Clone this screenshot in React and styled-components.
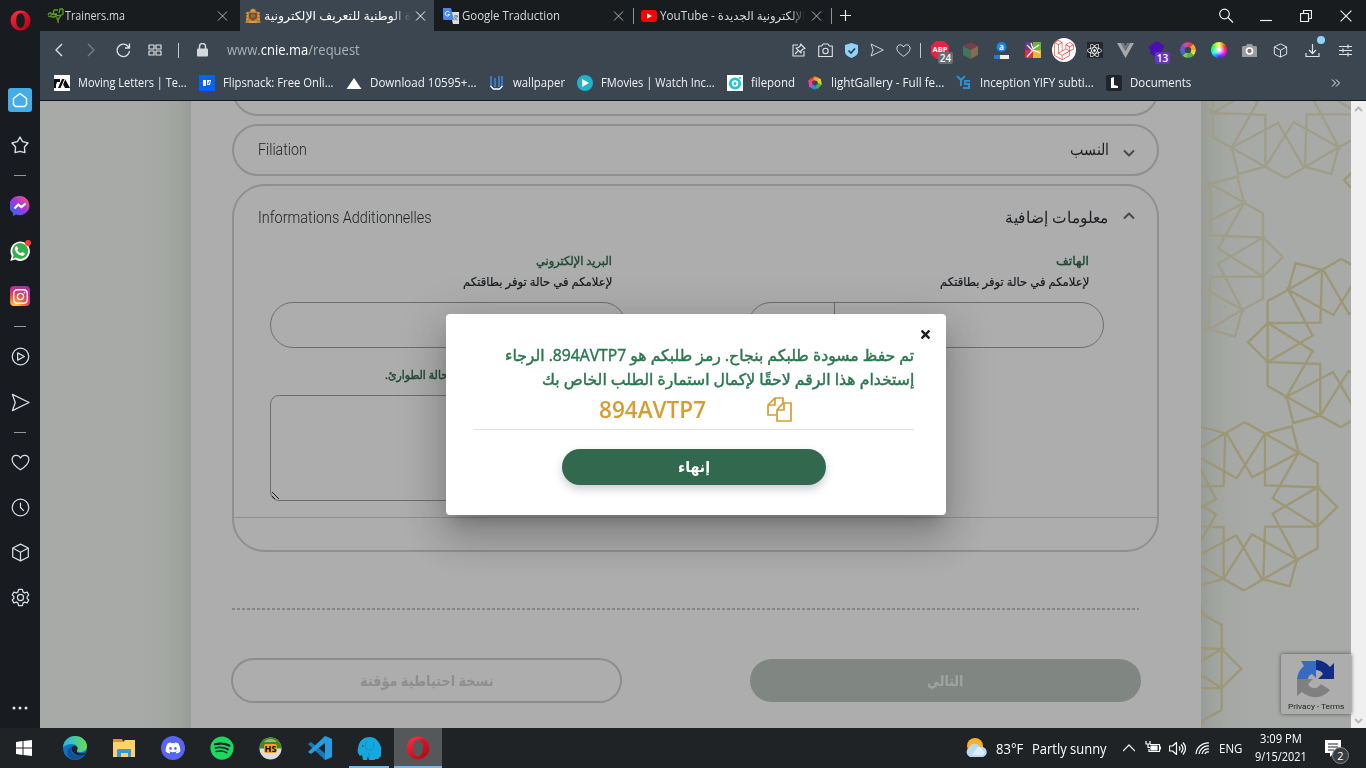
import React, { useLayoutEffect, useRef, useState } from "react";
import styled, { createGlobalStyle, css } from "styled-components";
import { FaInstagram, FaDiscord, FaSpotify, FaReact, FaLaravel, FaTimes } from "react-icons/fa";

const Global = createGlobalStyle`
  * { box-sizing: border-box; }
  body { margin: 0; overflow: hidden; background: #1f2224; }
  svg { display: block; flex: none; }
`;

const ui = `"Open Sans", "Noto Sans", "DejaVu Sans", sans-serif`;
const arabic = `"Open Sans", "DejaVu Sans", sans-serif`;

/* ---------- text fitted to a known measure ---------- */
const FitBox = styled.span`
  display: block;
  flex: none;
  width: ${(p) => p.$w}px;
  white-space: nowrap;
  direction: ${(p) => (p.$rtl ? "rtl" : "ltr")};
`;
const FitText = styled.span`
  display: inline-block;
  transform-origin: ${(p) => (p.$rtl ? "right" : "left")} center;
`;
function Fit({ w, rtl, children, className }) {
  const ref = useRef(null);
  const [scale, setScale] = useState(1);
  useLayoutEffect(() => {
    const natural = ref.current.offsetWidth;
    if (natural) setScale(w / natural);
  }, [w, children]);
  return (
    <FitBox $w={w} $rtl={rtl} className={className}>
      <FitText ref={ref} $rtl={rtl} style={{ transform: `scaleX(${scale})` }}>{children}</FitText>
    </FitBox>
  );
}

/* ---------- shell ---------- */
const Screen = styled.div`
  width: 1366px;
  height: 768px;
  display: grid;
  grid-template: 728px 40px / 40px 1326px;
  font-family: ${ui};
  overflow: hidden;
`;
const Side = styled.nav`
  background: #181b20;
  display: flex;
  flex-direction: column;
  color: #d9dfe4;
`;
const SideCell = styled.div`
  height: ${(p) => p.$h}px;
  margin-top: ${(p) => p.$mt || 0}px;
  display: flex;
  align-items: center;
  justify-content: center;
  position: relative;
`;
const Dash = styled.i`
  width: 12px;
  height: 1px;
  background: #8c9aa5;
`;
const HomeTile = styled.div`
  width: 24px;
  height: 24px;
  border-radius: 3px;
  background: #45ade5;
  color: #fff;
  display: grid;
  place-items: center;
`;
const InstaTile = styled.div`
  width: 20px;
  height: 20px;
  border-radius: 4px;
  background: radial-gradient(circle at 25% 105%, #fdc04f 0 10%, #f3643b 38%, #cf2f7e 65%, #7a3fc0 100%);
  color: #fff;
  display: grid;
  place-items: center;
`;
const RedDot = styled.i`
  position: absolute;
  left: 25px;
  top: 11px;
  width: 6px;
  height: 6px;
  border-radius: 50%;
  background: #ff3b30;
`;

const Browser = styled.div`
  display: flex;
  flex-direction: column;
  min-width: 0;
`;
const TabBar = styled.header`
  height: 31px;
  background: #181c1f;
  display: flex;
  align-items: center;
  color: #d5d8da;
`;
const Tab = styled.div`
  width: ${(p) => p.$w}px;
  height: 31px;
  padding: 0 7px 0 ${(p) => p.$pl || 7}px;
  display: flex;
  align-items: center;
  gap: ${(p) => p.$gap ?? 2}px;
  font-size: 12px;
  background: ${(p) => (p.$active ? "#3b4651" : "transparent")};
  color: ${(p) => (p.$active ? "#fff" : "#d5d8da")};
  > :last-child { margin-left: auto; }
`;
const TabTitle = styled(Fit)`
  ${(p) => p.$fade && css`
    mask-image: linear-gradient(to right, #000 ${p.$fade}%, transparent 100%);
  `}
`;
const TabRule = styled.i`
  width: 1px;
  height: 16px;
  background: #8b949c;
`;
const WinCell = styled.div`
  width: ${(p) => p.$w || 40}px;
  display: grid;
  place-items: center;
  margin-left: ${(p) => (p.$push ? "auto" : 0)};
  color: #eee;
`;

const AddressBar = styled.div`
  height: 38px;
  background: #3b4651;
  display: flex;
  align-items: center;
  padding-left: 3px;
  color: #dfe3e6;
`;
const ToolCell = styled.div`
  width: ${(p) => p.$w}px;
  height: 38px;
  display: flex;
  align-items: center;
  justify-content: center;
  position: relative;
  flex: none;
  opacity: ${(p) => (p.$dim ? 0.35 : 1)};
`;
const Url = styled.div`
  display: flex;
  margin-left: 8px;
  width: 559px;
  padding-bottom: 2px;
  font-size: 14px;
  color: #aab2b9;
  b { font-weight: 400; color: #fff; }
`;
const ToolRule = styled.i`
  width: 1px;
  height: 15px;
  background: #c0c6ca;
`;
const Badge = styled.span`
  position: absolute;
  left: 14px;
  top: 21px;
  min-width: 15px;
  height: 12px;
  border-radius: 2px;
  background: ${(p) => p.$c};
  color: #fff;
  font: 600 10px/12px ${ui};
  text-align: center;
`;
const BlueDot = styled.i`
  position: absolute;
  right: 3px;
  top: 5px;
  width: 8px;
  height: 8px;
  border-radius: 50%;
  background: #8fd4fb;
`;
const LaravelDisc = styled.div`
  width: 24px;
  height: 24px;
  border-radius: 50%;
  background: #fff;
  display: grid;
  place-items: center;
  color: #f9322c;
`;
const ReactTile = styled.div`
  width: 16px;
  height: 16px;
  background: #23272c;
  color: #fff;
  display: grid;
  place-items: center;
`;
const Wheel = styled.i`
  width: 16px;
  height: 16px;
  border-radius: 50%;
  background: ${(p) => (p.$soft
    ? "radial-gradient(circle, #fff 0 8%, transparent 55%), conic-gradient(#ff3, #f33, #f0f, #33f, #0ff, #3f3, #ff3)"
    : "conic-gradient(#e4433a 0 12%, #f2a32b 0 25%, #f0d23c 0 37%, #56b346 0 52%, #8bc63e 0 62%, #3b6ad8 0 75%, #7e4fc5 0 88%, #d0499c 0)")};
  ${(p) => !p.$soft && "mask-image: radial-gradient(circle, transparent 0 3px, #000 3.6px);"}
`;

const Bookmarks = styled.div`
  height: 31px;
  background: #3b4651;
  display: flex;
  align-items: center;
  gap: 12px;
  padding: 0 26px 4px 14px;
  color: #f0f2f4;
  font-size: 12px;
  > :last-child { margin-left: auto; }
`;
const Bookmark = styled.div`
  display: flex;
  align-items: center;
  gap: 8px;
`;

/* ---------- page ---------- */
const Page = styled.main`
  height: 628px;
  border-top: 1px solid #15191e;
  display: flex;
  position: relative;
  background: #a7aaa6;
  overflow: hidden;
`;
const Margin = styled.div`
  width: ${(p) => p.$w}px;
  flex: none;
  overflow: hidden;
  background: linear-gradient(${(p) => (p.$right ? "to right" : "to left")}, #989c98, #a0a49f 12px, #a5a8a4 30px, #a7aaa6 48px);
`;
const Card = styled.section`
  width: 1010px;
  flex: none;
  background: #adadad;
  padding: 0 42px 0 41px;
`;
const Panel = styled.div`
  width: 927px;
  height: ${(p) => p.$h}px;
  margin-top: ${(p) => p.$mt}px;
  border: 2px solid #8f8f8f;
  border-radius: ${(p) => p.$r || 26}px;
`;
const PanelHead = styled.div`
  height: ${(p) => p.$h}px;
  display: flex;
  align-items: center;
  padding: 0 22px 0 24px;
  font: 300 16px/20px Roboto, sans-serif;
  color: #1d1f21;
  > svg { color: #47494a; margin-top: ${(p) => p.$drop || 0}px; }
`;
const PanelTitle = styled(Fit)`
  margin: 0 14px 2px auto;
  font: 300 16px/20px ${arabic};
`;
const Columns = styled.div`
  display: flex;
  gap: 122px;
  padding: 0 36px;
  height: 267px;
`;
const Column = styled.div`
  width: 356px;
  display: flex;
  flex-direction: column;
`;
const FieldLabel = styled(Fit)`
  font: 400 12px/21px ${arabic};
  color: ${(p) => (p.$green ? "#1f4934" : "#17191b")};
  align-self: flex-end;
  margin-right: ${(p) => p.$mr ?? 14}px;
  height: 21px;
  margin-top: ${(p) => p.$mt || 0}px;
  -webkit-text-stroke: ${(p) => (p.$green ? 0.4 : 0.2)}px currentColor;
`;
const Pill = styled.div`
  height: 46px;
  margin-top: 10px;
  border: 1px solid #6c6f6e;
  border-radius: 23px;
  display: flex;
`;
const Prefix = styled.div`
  width: 86px;
  border-right: 1px solid #6c6f6e;
`;
const TextArea = styled.div`
  height: 106px;
  margin-top: 10px;
  border: 1px solid #6c6f6e;
  border-radius: 9px;
  display: flex;
  align-items: flex-end;
`;
const Footer = styled.div`
  height: 33px;
  border-top: 1px solid #8f8f8f;
`;
const Dashed = styled.div`
  width: 907px;
  height: 2px;
  margin-top: 56px;
  background: repeating-linear-gradient(to right, #858585 0 3px, transparent 3px 5px);
`;
const Actions = styled.div`
  display: flex;
  align-items: center;
  justify-content: space-between;
  width: 910px;
  margin: 48px 0 0 -1px;
`;
const Action = styled.div`
  width: 391px;
  height: ${(p) => (p.$solid ? 43 : 45)}px;
  padding-bottom: 2px;
  border-radius: 23px;
  border: ${(p) => (p.$solid ? "0" : "2px solid #8d8d8d")};
  background: ${(p) => (p.$solid ? "#808782" : "transparent")};
  color: ${(p) => (p.$solid ? "#a0a4a1" : "#8e8e8e")};
  display: flex;
  align-items: center;
  justify-content: center;
  font: 700 15px/20px ${arabic};
`;
const Captcha = styled.div`
  position: absolute;
  right: 15px;
  top: 553px;
  width: 70px;
  height: 60px;
  border-radius: 2px 0 0 2px;
  background: #adadad;
  box-shadow: 0 0 4px #555;
  display: flex;
  flex-direction: column;
  align-items: center;
  gap: 2px;
  padding-top: 6px;
  font: 8px/14px Roboto, sans-serif;
  color: #1d1d1d;
`;
const ScrollBar = styled.div`
  width: 15px;
  margin-left: auto;
  background: #f0f0f0;
  display: flex;
  flex-direction: column;
  justify-content: space-between;
  align-items: center;
  padding: 4px 0 3px;
`;

/* ---------- dialog ---------- */
const Dialog = styled.div`
  position: absolute;
  left: 406px;
  top: 213px;
  width: 500px;
  height: 201px;
  border-radius: 4px;
  background: #fff;
  box-shadow: 0 11px 15px -7px rgba(0,0,0,.2), 0 24px 38px 3px rgba(0,0,0,.14), 0 9px 46px 8px rgba(0,0,0,.12);
  padding: 14px 32px 0 28px;
  display: flex;
  flex-direction: column;
`;
const CloseRow = styled.div`
  display: flex;
  justify-content: flex-end;
  height: 15px;
  margin-right: -18px;
  color: #1d1d1f;
`;
const Message = styled(Fit)`
  font: 400 16px/24px ${arabic};
  -webkit-text-stroke: 0.45px currentColor;
  height: 24px;
  color: #2a774e;
  align-self: flex-end;
`;
const CodeRow = styled.div`
  height: 39px;
  border-bottom: 1px solid #dfe0e1;
  display: flex;
  align-items: center;
  padding: 0 0 2px 125px;
  gap: 61px;
  color: #d69d35;
  font: 600 24px/32px ${ui};
`;
const Finish = styled.div`
  width: 264px;
  height: 36px;
  margin: 19px 0 0 88px;
  padding-bottom: 2px;
  flex: none;
  border-radius: 18px;
  background: #32694e;
  box-shadow: 0 4px 9px rgba(40,50,70,.25);
  color: #fff;
  display: flex;
  align-items: center;
  justify-content: center;
  font: 700 15px/20px ${arabic};
`;

/* ---------- taskbar ---------- */
const TaskBar = styled.footer`
  grid-column: 1 / 3;
  background: #1f2325;
  display: flex;
  color: #fff;
  font-size: 12px;
`;
const Task = styled.div`
  width: ${(p) => p.$w || 49}px;
  height: 40px;
  display: grid;
  place-items: center;
  background: ${(p) => (p.$active ? "#54585b" : "transparent")};
  box-shadow: ${(p) => (p.$active ? "inset 0 -2px #76b9ed" : "none")};
`;
const RunningTask = styled(Task)`
  background: linear-gradient(#76b9ed, #76b9ed) 4px 38px / 40px 2px no-repeat;
`;
const Tray = styled.div`
  margin-left: auto;
  width: 402px;
  display: flex;
  align-items: center;
`;
const TrayItem = styled.div`
  margin-left: ${(p) => p.$ml || 0}px;
  font-size: ${(p) => p.$fs || 12}px;
  position: relative;
`;
const Clock = styled.div`
  margin-left: 13px;
  display: flex;
  flex-direction: column;
  align-items: center;
  font-size: 12px;
  line-height: 18px;
`;
const Count = styled.span`
  position: absolute;
  left: 7px;
  top: 7px;
  width: 17px;
  height: 17px;
  border-radius: 50%;
  background: #3a3d3f;
  border: 1px solid #85898c;
  font: 11px/15px ${ui};
  text-align: center;
`;

/* ---------- drawings ---------- */
const Line = ({ s = 20, vb = 20, w = 1.2, children }) => (
  <svg width={s} height={s} viewBox={`0 0 ${vb} ${vb}`} fill="none" stroke="currentColor" strokeWidth={w} strokeLinejoin="round">{children}</svg>
);
const Opera = ({ s }) => (
  <svg width={s} height={s} viewBox="0 0 24 24">
    <defs><linearGradient id="op" x1="0" y1="0" x2="0.4" y2="1"><stop stopColor="#ff3040" /><stop offset="1" stopColor="#c80a1c" /></linearGradient></defs>
    <path fillRule="evenodd" fill="url(#op)" d="M12 .6C5.600.6.7 5.700.7 12S5.600 23.400 12 23.400 23.300 18.300 23.300 12 18.400.6 12 .6zM12 3.600c3 0 5 3.800 5 8.400s-2 8.400-5 8.400-5-3.800-5-8.400 2-8.400 5-8.400z" />
    <path fill="#a90a18" fillOpacity=".4" d="M12 3.600c3-1.800 6.200-1 8.400 1.300 3.900 4.100 3.900 10.100 0 14.200-2.200 2.300-5.400 3.100-8.400 1.300 3 0 5-3.800 5-8.400s-2-8.400-5-8.400z" />
  </svg>
);
const Cross = ({ s = 10 }) => <Line s={s} vb={10} w={1}><path d="M.5.5l9 9M9.500.5l-9 9" /></Line>;
const Box = ({ s }) => <Line s={s} w={1.3}><path d="M10 1.200l8.200 4v9.600L10 18.800l-8.200-4V5.200zM1.800 5.200L10 9.700l8.200-4.500M10 9.700v9" /></Line>;
const Heart = ({ s }) => <Line s={s} w={1.3}><path d="M10 17.700C6 15.200 1.200 11.400 1.200 7.200c0-5.400 6.500-6.400 8.800-1.900 2.300-4.500 8.800-3.500 8.800 1.900 0 4.200-4.800 8-8.800 10.500z" /></Line>;
const Plane = ({ s }) => <Line s={s} w={1.3}><path d="M1.500 1.500L19 10 1.500 18.500 4.500 10z" /></Line>;

const Muscle = () => (
  <svg width="17" height="16" viewBox="0 0 17 16" fill="none" stroke="#5f9a27" strokeWidth="1.300">
    <path d="M1 7C3 3 5 5 4 8M1 8c3 1 6 2 8 0M9 8c3-1 6 0 7-2V1M16 1h-3l-1 4M7 2h4M7 2L6 6h4M5 6l5 1M10 9c-1 2 2 3 1 6M14 8c-2 1-3 3-3 7" />
  </svg>
);
const Crest = () => (
  <svg width="16" height="16" viewBox="0 0 16 16">
    <path d="M8 0l2.500 3.500L14 4l.5 6 1.200 5H.3l1.200-5L2 4l3.500-.5z" fill="#b98232" />
    <path d="M5.500 1.500h5v2h-5z" fill="#e0a33c" /><path d="M4 5h8v5l-4 3-4-3z" fill="#9c3a2c" /><circle cx="8" cy="8" r="2" fill="#3e9855" />
    <path d="M1 5h2M13 5h2M1 8h2M13 8h2M1 11h2M13 11h2M4 14h8" stroke="#e8b84e" />
  </svg>
);
const Translate = () => (
  <svg width="17" height="16" viewBox="0 0 17 16">
    <path d="M7 4h9v12H10z" fill="#dcdfe2" /><path d="M0 0h8l3 12H1L0 11z" fill="#4a86ee" />
    <path d="M6.500 4.500A2.300 2.300 0 1 0 6.700 6.500H4.700" fill="none" stroke="#fff" />
    <path d="M11 8h4M13 7v1M14.500 8c-.5 2-2 3-3 4M11.500 9c1 2 2 3 3 3" fill="none" stroke="#687078" />
  </svg>
);
const YouTube = () => <svg width="16" height="12" viewBox="0 0 16 12"><rect width="16" height="12" rx="3" fill="#f00" /><path d="M6 3.300v5.400L11 6z" fill="#fff" /></svg>;

const bookmarks = [
  ["Moving Letters | Te...", 109, <svg width="16" height="16"><path fill="#fff" d="M0 0h16v16H0z" /><path fill="#0b0b0b" d="M0 4h6v3H3l-1 3v3H0zM4 13l4-9h3l5 9h-5l-2-4-2 4z" /><path stroke="#fff" d="M7 13l4-9" /></svg>],
  ["Flipsnack: Free Onli...", 111, <svg width="16" height="16"><path fill="#0362fc" d="M0 0h16v16H0z" /><path fill="#fff" d="M4 5h3v6H4zM8 5h4l-1 5H8z" /><path d="M9 9l2-3" stroke="#0362fc" /></svg>],
  ["Download 10595+...", 107, <svg width="16" height="16"><path fill="#fff" d="M8 3l7.500 11H.5z" /></svg>],
  ["wallpaper", 52, <svg width="16" height="16" fill="none"><path d="M2 1v10M6 3v9M10 1v11M13 1v10" stroke="#3b7fc9" strokeWidth="1.800" /><path d="M1.500 11l3 3h6l3-3" stroke="#fff" strokeWidth="1.300" /></svg>],
  ["FMovies | Watch Inc...", 114, <svg width="16" height="16"><circle cx="8" cy="8" r="8" fill="#20b2c8" /><path fill="#fff" d="M5 4l7 4-7 4z" /></svg>],
  ["filepond", 44, <svg width="16" height="16"><path fill="#fff" d="M0 0h16v16H0z" /><circle cx="8" cy="8.500" r="4.700" fill="none" stroke="#1ac5d7" strokeWidth="2.800" /><circle cx="8" cy="8.500" r="1.500" fill="#1ac5d7" /><circle cx="13" cy="3" r="1" fill="#1ac5d7" /></svg>],
  ["lightGallery - Full fe...", 113, <svg width="16" height="16" fill="none" strokeWidth="3.600"><path d="M3 6L8 3" stroke="#f44336" /><path d="M7 3l5 2" stroke="#ff9b21" /><path d="M12 4l1 6" stroke="#d5d827" /><path d="M13 9l-4 4" stroke="#4caf50" /><path d="M9 13l-5-2" stroke="#2090ef" /><path d="M4 12L3 5" stroke="#e64598" /></svg>],
  ["Inception YIFY subti...", 114, <svg width="16" height="16" fill="none" stroke="#2d8fcf" strokeWidth="2"><path d="M1 1l4 4 4-4M5 5v6M14 6H9v3h4v4H7" /></svg>],
  ["Documents", 61, <svg width="16" height="16"><rect width="16" height="16" rx="2" fill="#20242b" /><path d="M5 3l3-1v8l4 1v2H5z" fill="#fff" /></svg>],
];

function Rosette({ x, y, faint }) {
  const half = "M0-253L62-218 163-161 220-129V126L158 160 57 219 0 252M62-218L143-240 163-161M220-57L279 2 220 60M158 160L136 240 57 219M62-218V-63L220-57 85 22 158 160 23 84-62 218M220 60L85-24 163-161 24-87-54-221M220 60L62 61 57 219";
  return (
    <g transform={`translate(${x} ${y}) scale(.3333)`} stroke={faint ? "#a09e88" : "#9d9775"} strokeWidth="7" fill="none">
      <path d={half} /><path d={half} transform="rotate(180)" />
    </g>
  );
}
const Pattern = () => (
  <svg width="150" height="627" viewBox="1201 101 150 627">
    <Rosette x={1286} y={94} faint /><Rosette x={1189.7} y={256.5} faint />
    <Rosette x={1437} y={181} /><Rosette x={1341} y={343} /><Rosette x={1244.3} y={506.3} /><Rosette x={1148.3} y={668} />
  </svg>
);

const sideItems = [
  [44, <HomeTile><Line s={16} vb={16} w={1.4}><path d="M1.500 6.500L8 1.500l6.500 5v6l-2 2h-9l-2-2z" /></Line></HomeTile>, 38],
  [46, <Line s={18} w={1.5}><path d="M10 1.200l2.900 5 6 1.600-4 4.500.6 6.200L10 17l-5.500 1.500.6-6.200-4-4.500 6-1.600z" /></Line>],
  [15, <Dash />],
  [46, <svg width="20" height="20" viewBox="0 0 20 20"><defs><linearGradient id="ms" x1="0" y1="1" x2="1" y2="0"><stop stopColor="#087df5" /><stop offset=".5" stopColor="#a033e8" /><stop offset="1" stopColor="#ff5f67" /></linearGradient></defs><path fill="url(#ms)" d="M10 0a10 9.600 0 1 1-4 18.600L3 20v-3A10 9.600 0 0 1 10 0z" /><path d="M4.500 12.500l3.700-4 3.300 2.500 4-3.500" fill="none" stroke="#fff" strokeWidth="2.200" /></svg>],
  [44, <><svg width="20" height="20" viewBox="0 0 20 20"><path fill="#fff" d="M.3 20l1.400-5A9.700 9.700 0 1 1 5.200 18.600z" /><path fill="#35b04a" d="M2.600 17.700l1-3.400a7.900 7.900 0 1 1 2.300 2.300z" /><path fill="#fff" d="M7 5.200l1.300 2.500-1 1.200c.8 1.500 1.900 2.500 3.500 3.300l1.300-1.300 2.600 1.400c0 2.100-1.700 2.800-3.200 2.500-3.500-.7-6.200-3.700-6.600-6.500C4.700 6.500 5.600 5.200 7 5.200z" /></svg><RedDot /></>],
  [46, <InstaTile><FaInstagram size={17} /></InstaTile>],
  [14, <Dash />],
  [46, <Line s={19} w={1.3}><circle cx="10" cy="10" r="8.700" /><path d="M7 6.200L14 10l-7 3.800z" /></Line>],
  [46, <Plane s={19} />],
  [15, <Dash />],
  [45, <Heart s={19} />],
  [45, <Line s={19} w={1.3}><circle cx="10" cy="10" r="8.700" /><path d="M10 5v5l3.500 3.500" /></Line>],
  [45, <Box s={19} />],
  [45, <Line s={19} w={1.3}><path d="M8 1.500h4l.6 2.600 1.700 1 2.700-.8 1.700 3.200L17 9v2l1.700 1.500-1.700 3.200-2.700-.8-1.700 1-.6 2.600H8l-.6-2.600-1.700-1-2.700.8-1.700-3.200L3 11V9L1.300 7.500 3 4.300l2.700.8 1.700-1z" /><circle cx="10" cy="10" r="3.200" /></Line>],
];

const extensions = [
  <><svg width="18" height="18" viewBox="0 0 18 18"><path d="M5 0h8l5 5v8l-5 5H5l-5-5V5z" fill="#ee2041" /><text x="9" y="10.500" fontSize="7.500" fontWeight="700" fill="#fff" textAnchor="middle" fontFamily="Open Sans">ABP</text></svg><Badge $c="#696d70">24</Badge></>,
  <svg width="15" height="17" viewBox="0 0 15 17"><path d="M7.500 0L15 4 7.500 8 0 4z" fill="#793d4b" /><path d="M0 4l7.500 4v9L0 13z" fill="#3f7662" /><path d="M15 4L7.500 8v9l7.500-4z" fill="#856c4c" /></svg>,
  <svg width="17" height="17" viewBox="0 0 17 17"><circle cx="8.500" cy="5" r="5" fill="#1585ee" /><text x="8.500" y="8" fontSize="8" fill="#fff" textAnchor="middle" fontFamily="Open Sans" fontWeight="700">a</text><path d="M1 13h15v4H1z" fill="#eee" /><path d="M1 13h6v4H1z" fill="#267ad1" /></svg>,
  <svg width="16" height="16"><path fill="#693989" d="M0 0h8v8H0z" /><path fill="#69b43a" d="M8 0h8v8H8z" /><path fill="#dc3039" d="M0 8h8v8H0z" /><path fill="#eab73a" d="M8 8h8v8H8z" /><path d="M7 8L2 3M8 7L6 1M8 7l6-4M8 8l7 3M8 8l-6 7" stroke="#fff" strokeWidth="1.200" /></svg>,
  <LaravelDisc><FaLaravel size={20} /></LaravelDisc>,
  <ReactTile><FaReact size={15} /></ReactTile>,
  <svg width="17" height="15" viewBox="0 0 17 15"><path d="M0 0h4l4.500 8L13 0h4L8.500 15z" fill="#a5a9ac" /><path d="M4 0h3l1.500 3L10 0h3L8.500 8z" fill="#70777d" /></svg>,
  <><svg width="17" height="18" viewBox="0 0 17 18"><path d="M8.500 0L17 5l-3 4v5l-5 3-7-5V8L0 6z" fill="#4a0fb0" /></svg><Badge $c="#6636bd">13</Badge></>,
  <Wheel />,
  <Wheel $soft />,
  <svg width="15" height="13" viewBox="0 0 15 13"><path fill="#9c9c9c" d="M1 2h3l1-2h5l1 2h3l1 1v10H0V3z" /><circle cx="7.500" cy="7" r="3" fill="#777" stroke="#fff" strokeWidth="1.700" /></svg>,
];

const Chevron = ({ up }) => <Line s={12} vb={12} w={2}><path d={up ? "M1 8.500L6 3.500l5 5" : "M1 3.500L6 8.500l5-5"} /></Line>;

export default function App() {
  return (
    <>
      <Global />
      <Screen>
        <Side>
          <SideCell $h={40}><Opera s={21} /></SideCell>
          {sideItems.map(([h, icon, mt], i) => <SideCell key={i} $h={h} $mt={mt}>{icon}</SideCell>)}
          <SideCell $h={20} $mt={78}><svg width="16" height="4" fill="#e3e7ea"><circle cx="2" cy="2" r="1.500" /><circle cx="8" cy="2" r="1.500" /><circle cx="14" cy="2" r="1.500" /></svg></SideCell>
        </Side>

        <Browser>
          <TabBar>
            <Tab $w={200} $pl={7} $gap={1}><Muscle /><TabTitle w={60}>Trainers.ma</TabTitle><svg width="22" height="10"><path d="M7 .5l9 9M16 .5l-9 9" stroke="#aeb3b7" /></svg></Tab>
            <Tab $w={194} $pl={5} $gap={3} $active><Crest /><TabTitle w={147} rtl $fade={86}>ة الوطنية للتعريف الإلكترونية</TabTitle><svg width="12" height="10"><path d="M1 .5l9 9M10 .5l-9 9" stroke="#fff" /></svg></Tab>
            <Tab $w={199} $pl={9}><Translate /><TabTitle w={98}>Google Traduction</TabTitle><svg width="15" height="10"><path d="M3 .5l9 9M12 .5l-9 9" stroke="#aeb3b7" /></svg></Tab>
            <TabRule />
            <Tab $w={197} $pl={7} $gap={3}><YouTube /><TabTitle w={145} $fade={90}>YouTube - الإلكترونية الجديدة</TabTitle><svg width="15" height="10"><path d="M3 .5l9 9M12 .5l-9 9" stroke="#aeb3b7" /></svg></Tab>
            <TabRule />
            <WinCell $w={26}><Line s={11} vb={11} w={1.2}><path d="M5.500 0v11M0 5.500h11" /></Line></WinCell>
            <WinCell $push><Line s={16} vb={16}><circle cx="6.500" cy="6" r="4.800" /><path d="M10 9.500l5 5" /></Line></WinCell>
            <WinCell><Line s={12} vb={12}><path d="M0 10.500h12" /></Line></WinCell>
            <WinCell><Line s={12} vb={12}><path d="M.5 3.500h8v8h-8zM3.500 3.500v-3h8v8h-3" /></Line></WinCell>
            <WinCell><Cross s={12} /></WinCell>
          </TabBar>

          <AddressBar>
            <ToolCell $w={32}><Line s={14} vb={14} w={1.4}><path d="M10 1L4 7l6 6" /></Line></ToolCell>
            <ToolCell $w={32} $dim><Line s={14} vb={14} w={1.4}><path d="M4 1l6 6-6 6" /></Line></ToolCell>
            <ToolCell $w={32}><Line s={15} vb={15} w={1.3}><path d="M13.500 8A6.200 6.200 0 1 1 12 3.300L13.500 5M13.500.5V5H9" /></Line></ToolCell>
            <ToolCell $w={32}><Line s={14} vb={14} w={1.2}><path d="M1 2h5v4H1zM8 2h5v4H8zM1 8h5v4H1zM8 8h5v4H8z" /></Line></ToolCell>
            <ToolCell $w={14}><ToolRule /></ToolCell>
            <ToolCell $w={34}><svg width="11" height="14" viewBox="0 0 11 14"><path d="M2.500 6V3.500a3 3 0 0 1 6 0V6" fill="none" stroke="#d5d8da" strokeWidth="1.500" /><rect y="5.500" width="11" height="8" rx="1" fill="#d5d8da" /></svg></ToolCell>
            <Url><Fit w={133}>www.<b>cnie.ma</b>/request</Fit></Url>
            <ToolCell $w={26}><Line s={14} vb={14} w={1.1}><path d="M6 2H1v11h11V8M8.500 1l4.500 4.500-2 .5-2 2v2L4 5l2.500-.5 2-2zM6 8l-3 3" /></Line></ToolCell>
            <ToolCell $w={26}><Line s={15} vb={15} w={1.1}><path d="M.7 3h3L5 1h5l1.300 2h3v10.500H.7z" /><circle cx="7.500" cy="8" r="2.700" /></Line></ToolCell>
            <ToolCell $w={26}><svg width="13" height="15" viewBox="0 0 13 15"><path d="M0 2l6.500-2L13 2v7c0 3-4 5-6.500 6C4 14 0 12 0 9z" fill="#8fd2fa" /><path d="M3.500 7.500L6 10l4-4.500" fill="none" stroke="#303b45" strokeWidth="1.600" /></svg></ToolCell>
            <ToolCell $w={26}><Plane s={14} /></ToolCell>
            <ToolCell $w={26}><Heart s={15} /></ToolCell>
            <ToolCell $w={8}><ToolRule /></ToolCell>
            {extensions.map((e, i) => <ToolCell key={i} $w={31}>{e}</ToolCell>)}
            <ToolCell $w={31}><Box s={15} /></ToolCell>
            <ToolCell $w={32}><Line s={15} vb={15} w={1.2}><path d="M7.500 1v9M4 7l3.500 3.500L11 7M1 10v3.500h13V10" /></Line><BlueDot /></ToolCell>
            <ToolCell $w={34}><Line s={13} vb={13} w={1.2}><path d="M0 2.500h13M0 6.500h13M0 10.500h13M9 .5v4M4 4.500v4M9 8.500v4" /></Line></ToolCell>
          </AddressBar>

          <Bookmarks>
            {bookmarks.map(([name, w, icon]) => <Bookmark key={name}>{icon}<Fit w={w}>{name}</Fit></Bookmark>)}
            <svg width="9" height="8" viewBox="0 0 9 8" fill="none" stroke="#f0f2f4"><path d="M1 .5L4.500 4 1 7.500M5 .5L8.500 4 5 7.500" /></svg>
          </Bookmarks>

          <Page>
            <Margin $w={151} />
            <Card>
              <Panel $h={52} $mt={-37} />
              <Panel $h={52} $mt={8}>
                <PanelHead $h={48} $drop={5}><Fit w={49}>Filiation</Fit><PanelTitle w={39} rtl>النسب</PanelTitle><Chevron /></PanelHead>
              </Panel>
              <Panel $h={368} $mt={8} $r={33}>
                <PanelHead $h={64} $drop={-4}><Fit w={174}>Informations Additionnelles</Fit><PanelTitle w={104} rtl>معلومات إضافية</PanelTitle><Chevron up /></PanelHead>
                <Columns>
                  <Column>
                    <FieldLabel w={76} rtl $green>البريد الإلكتروني</FieldLabel>
                    <FieldLabel w={149} rtl>لإعلامكم في حالة توفر بطاقتكم</FieldLabel>
                    <Pill />
                    <FieldLabel w={63} rtl $green $mt={16} $mr={178}>حالة الطوارئ.</FieldLabel>
                    <TextArea><svg width="9" height="9"><path d="M1 1l7 7M1 5l3 3" stroke="#222" /></svg></TextArea>
                  </Column>
                  <Column>
                    <FieldLabel w={33} rtl $green $mr={15}>الهاتف</FieldLabel>
                    <FieldLabel w={149} rtl $mr={15}>لإعلامكم في حالة توفر بطاقتكم</FieldLabel>
                    <Pill><Prefix /></Pill>
                  </Column>
                </Columns>
                <Footer />
              </Panel>
              <Dashed />
              <Actions>
                <Action><Fit w={134} rtl>نسخة احتياطية مؤقتة</Fit></Action>
                <Action $solid><Fit w={36} rtl>التالي</Fit></Action>
              </Actions>
            </Card>
            <Margin $w={150} $right><Pattern /></Margin>
            <ScrollBar>
              <Line s={9} vb={9} w={2}><path d="M1 6l3.500-3.500L8 6" stroke="#b9b9b9" /></Line>
              <Line s={9} vb={9} w={2}><path d="M1 3l3.500 3.500L8 3" stroke="#b9b9b9" /></Line>
            </ScrollBar>
            <Captcha>
              <svg width="38" height="38" viewBox="0 0 38 38">
                <path fill="#356bc0" d="M0 19A19 19 0 0 1 7 6L4 1h15v17l-4-4c-3 1-4 3-4 5z" />
                <path fill="#142b86" d="M19 0a19 19 0 0 1 14 7l4-4v16H21l5-5c-2-3-4-4-7-4z" />
                <path fill="#808080" d="M0 19h16l-5 5c2 5 9 6 13 0l9 6a19 19 0 0 1-28 2L0 36z" />
              </svg>
              <Fit w={56}>Privacy - Terms</Fit>
            </Captcha>
            <Dialog>
              <CloseRow><FaTimes size={13} /></CloseRow>
              <Message w={409} rtl>تم حفظ مسودة طلبكم بنجاح. رمز طلبكم هو 894AVTP7. الرجاء</Message>
              <Message w={372} rtl>إستخدام هذا الرقم لاحقًا لإكمال استمارة الطلب الخاص بك</Message>
              <CodeRow>
                <Fit w={107}>894AVTP7</Fit>
                <svg width="25" height="25" viewBox="0 0 25 25" fill="none" stroke="currentColor" strokeWidth="1.700" strokeLinejoin="round"><path d="M9 18H1V8l7-7h8v5M8 1v7H1M16 6h8v18H10V13zM17 6v7h-7" /></svg>
              </CodeRow>
              <Finish><Fit w={32} rtl>إنهاء</Fit></Finish>
            </Dialog>
          </Page>
        </Browser>

        <TaskBar>
          <Task $w={48}><svg width="16" height="16" viewBox="0 0 16 16" fill="#fff"><path d="M0 2l6.500-1v6.500H0zM7.500.9L16 0v7.500H7.500zM0 8.500h6.500V15L0 14zM7.500 8.500H16V16l-8.500-1z" /></svg></Task>
          <Task $w={53}><svg width="24" height="24" viewBox="0 0 24 24"><defs><linearGradient id="ed"><stop stopColor="#2bb5e8" /><stop offset="1" stopColor="#67dc53" /></linearGradient></defs><circle cx="12" cy="12" r="12" fill="#0c74c8" /><path d="M0 11C1 4 6 0 12 0c7 0 12 5 12 10 0 4-3 6-7 6-3 0-4-1-3-2 3-5-6-9-14-3z" fill="url(#ed)" /><path d="M8 13c0 6 6 9 14 5-4 6-13 8-17 2-2-5 1-9 4-9z" fill="#124f97" /><path d="M10 10c-3 3-1 7 4 9 3 1 6 0 8-1 1-1 0-2-1-1-5 1-8 0-7-3 2-2-1-5-4-4z" fill="#1f2325" /></svg></Task>
          <Task $w={45}><svg width="22" height="18" viewBox="0 0 22 18"><path fill="#dc9a13" d="M0 0h9l1 2v3H0z" /><path fill="#fdd367" d="M0 3h10l2-2h10v17H0z" /><path fill="#3b95dd" d="M5 10h13v8h-3v-4H8v4H4v-7z" /></svg></Task>
          <Task $w={53}><svg width="24" height="24" viewBox="0 0 24 24"><circle cx="12" cy="12" r="12" fill="#5865f2" /><FaDiscord x="4" y="4" size={16} color="#fff" /></svg></Task>
          <Task $w={46}><FaSpotify size={24} color="#1ed760" /></Task>
          <Task $w={50}><svg width="23" height="23" viewBox="0 0 23 23"><circle cx="11.500" cy="11.500" r="11" fill="#ddd" /><path d="M.5 11.500a11 11 0 0 1 22 0z" fill="#3f8a20" /><path d="M5 5c3-4 10-4 13 0z" fill="#8fbe75" /><rect x="5" y="7" width="13" height="9" rx="2" fill="#f2a321" /><text x="11.500" y="15" fontSize="9" fontWeight="700" fontFamily="Open Sans" textAnchor="middle">HS</text></svg></Task>
          <Task $w={50}><svg width="24" height="24" viewBox="0 0 24 24"><path d="M17 0l7 3v18l-7 3L0 8l3-2 15 12z" fill="#1479bd" /><path d="M17 0l7 3v18l-7 3V7L3 18l-3-2z" fill="#269cdf" /></svg></Task>
          <RunningTask><svg width="25" height="25" viewBox="0 0 25 25"><path d="M1 12C2 5 6 1 13 1c5 0 9 4 11 10v9l-3 3h-3v1h-6l-1-4-1 4H6l-1-5-2 1c-2-2-3-5-2-8z" fill="#16a7df" /><path d="M10 5c-3 5-1 9 3 9 3 0 5-4 3-8M12 20v-3" fill="none" stroke="#0c8fc6" /><circle cx="6" cy="10" r=".8" fill="#064e72" /></svg></RunningTask>
          <Task $w={48} $active><Opera s={24} /></Task>
          <Tray>
            <svg width="24" height="20" viewBox="0 0 24 20"><circle cx="11" cy="8" r="8" fill="#ffad24" /><path d="M6 19a5 5 0 0 1-1-9 6 6 0 0 1 11-1 5 5 0 0 1 3 10z" fill="#b9daf3" /><path d="M8 17l6-8c4 0 4 2 4 3 3 1 3 5 0 5z" fill="#dceffd" /></svg>
            <TrayItem $ml={8} $fs={14}><Fit w={27}>83°F</Fit></TrayItem>
            <TrayItem $ml={9} $fs={14}><Fit w={75}>Partly sunny</Fit></TrayItem>
            <TrayItem $ml={16}><Line s={12} vb={12}><path d="M0 9l6-6 6 6" /></Line></TrayItem>
            <TrayItem $ml={10}><Line s={16} vb={16}><path d="M5 4.500h9.500v7H4V9M1 1v3h4V1M3 4v3.500h2M15.500 6.500v3" /><path d="M6 6h6v4H6z" fill="currentColor" /></Line></TrayItem>
            <TrayItem $ml={8}><Line s={17} vb={17}><path d="M.5 6h3l4-3.500v12L3.500 11h-3zM10 6.500q2 2 0 4M12 4.500q4 4 0 8M14 2.500q5 6 0 12" /></Line></TrayItem>
            <TrayItem $ml={9}><Line s={15} vb={15}><path d="M1 13A12 12 0 0 1 14 2M4 13a9 9 0 0 1 10-8M7 13a6 6 0 0 1 7-5M10 13a3 3 0 0 1 4-2" /></Line></TrayItem>
            <TrayItem $ml={9}><Fit w={23}>ENG</Fit></TrayItem>
            <Clock><Fit w={42}>3:09 PM</Fit><Fit w={52}>9/15/2021</Fit></Clock>
            <TrayItem $ml={18}><svg width="17" height="17" viewBox="0 0 17 17"><path d="M0 0h16v13H9l-4 4v-4H0z" fill="#fff" /><path d="M3 4h10M3 7h10M3 10h6" stroke="#1f2325" /></svg><Count>2</Count></TrayItem>
          </Tray>
        </TaskBar>
      </Screen>
    </>
  );
}
